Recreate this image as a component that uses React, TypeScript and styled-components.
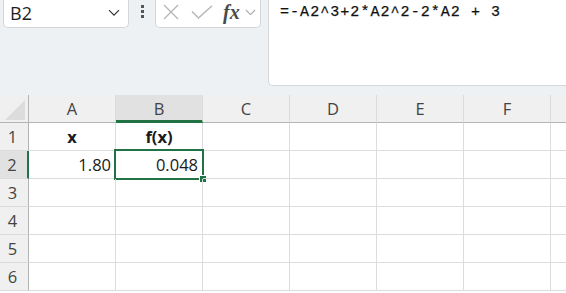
import React from "react";
import styled, { createGlobalStyle } from "styled-components";

const Global = createGlobalStyle`
  html, body { margin: 0; padding: 0; background: #ffffff; }
  body { font-family: "Open Sans", "Noto Sans", sans-serif; overflow: hidden; }
  * { box-sizing: border-box; }
`;

const Page = styled.div`
  width: 566px;
  height: 293px;
  overflow: hidden;
  display: flex;
  flex-direction: column;
`;

const Toolbar = styled.div`
  height: 95px;
  background: #eef1f3;
  display: flex;
  align-items: flex-start;
  padding-left: 3px;
  flex: none;
`;

const NameBox = styled.div`
  width: 126px;
  height: 28px;
  background: #fff;
  border: 1px solid #d4d6d8;
  border-top: none;
  border-radius: 0 0 5px 5px;
  display: flex;
  align-items: center;
  justify-content: space-between;
  padding: 0 8px 1px 6px;
  font-size: 18px;
  color: #1f1f1f;
`;

const Dots = styled.div`
  width: 26px;
  height: 28px;
  display: flex;
  flex-direction: column;
  align-items: center;
  justify-content: center;
  gap: 2px;
  padding-bottom: 6px;
`;

const Dot = styled.span`
  width: 3px;
  height: 3px;
  background: #555;
  display: block;
`;

const FxBox = styled.div`
  width: 106px;
  height: 28px;
  background: #fff;
  border: 1px solid #d4d6d8;
  border-top: none;
  border-radius: 0 0 5px 5px;
  display: flex;
  align-items: center;
  padding: 0 0 3px 7px;
`;

const Fx = styled.span`
  font-family: "Liberation Serif", "DejaVu Serif", serif;
  font-style: italic;
  font-weight: bold;
  font-size: 20px;
  color: #4a4a4a;
  margin-left: 10px;
  line-height: 1;
`;

const FormulaBar = styled.div`
  flex: 1;
  margin-left: 7px;
  height: 86px;
  background: #fff;
  border: 1px solid #d4d6d8;
  border-top: none;
  border-right: none;
  border-radius: 0 0 0 5px;
  padding: 4px 0 0 11px;
  font-family: "Liberation Mono", "DejaVu Sans Mono", monospace;
  font-size: 15px;
  letter-spacing: 1.05px;
  color: #111;
  white-space: pre;
  -webkit-text-stroke: 0.25px #111;
`;

const Grid = styled.div`
  display: grid;
  grid-template-columns: 29px repeat(7, 87px);
  grid-auto-rows: 28px;
  background: #fff;
`;

const Corner = styled.div`
  background: #f0f0f0;
  border-right: 1px solid #b4b4b4;
  border-bottom: 1px solid #b4b4b4;
  position: relative;
`;

const ColHead = styled.div<{ $sel?: boolean }>`
  background: ${(p) => (p.$sel ? "#e1e1e1" : "#f0f0f0")};
  border-right: 1px solid #dcdcdc;
  border-bottom: ${(p) => (p.$sel ? "3px solid #217346" : "1px solid #b4b4b4")};
  display: flex;
  align-items: center;
  justify-content: center;
  font-size: 16.5px;
  color: #444;
  padding-top: ${(p) => (p.$sel ? "1px" : "0")};
`;

const RowHead = styled.div<{ $sel?: boolean }>`
  background: ${(p) => (p.$sel ? "#e1e1e1" : "#f0f0f0")};
  border-right: ${(p) => (p.$sel ? "2px solid #217346" : "1px solid #b4b4b4")};
  border-bottom: 1px solid #dcdcdc;
  display: flex;
  align-items: center;
  justify-content: center;
  font-size: 16.5px;
  color: #444;
  padding-right: 3px;
`;

const Cell = styled.div<{ $align?: "left" | "center" | "right"; $bold?: boolean }>`
  border-right: 1px solid #dcdcdc;
  border-bottom: 1px solid #dcdcdc;
  display: flex;
  align-items: center;
  justify-content: ${(p) =>
    p.$align === "center" ? "center" : p.$align === "right" ? "flex-end" : "flex-start"};
  padding: 0 4px 0 4px;
  font-size: 16.5px;
  font-weight: ${(p) => (p.$bold ? 700 : 400)};
  color: #1a1a1a;
  position: relative;
`;

const Selection = styled.div`
  position: absolute;
  left: -2px;
  top: -2px;
  right: -2px;
  bottom: -2px;
  border: 2px solid #217346;
  pointer-events: none;
`;

const Handle = styled.div`
  position: absolute;
  right: -4px;
  bottom: -4px;
  width: 6px;
  height: 6px;
  background: #217346;
  outline: 1px solid #fff;
`;

const Chevron = ({ size = 12, color = "#444" }: { size?: number; color?: string }) => (
  <svg width={size} height={size * 0.6} viewBox="0 0 12 7" fill="none">
    <path d="M1 1l5 5 5-5" stroke={color} strokeWidth="1.2" />
  </svg>
);

const cols = ["A", "B", "C", "D", "E", "F", ""];

export default function App() {
  const rows = [1, 2, 3, 4, 5, 6];
  const content: Record<string, { v: string; align: "left" | "center" | "right"; bold?: boolean }> = {
    A1: { v: "x", align: "center", bold: true },
    B1: { v: "f(x)", align: "center", bold: true },
    A2: { v: "1.80", align: "right" },
    B2: { v: "0.048", align: "right" },
  };
  return (
    <Page>
      <Global />
      <Toolbar>
        <NameBox>
          <span>B2</span>
          <Chevron size={12} color="#333" />
        </NameBox>
        <Dots>
          <Dot />
          <Dot />
          <Dot />
        </Dots>
        <FxBox>
          <svg width="16" height="16" viewBox="0 0 16 16" fill="none">
            <path d="M1 1l14 14M15 1L1 15" stroke="#b4b4b4" strokeWidth="1.3" />
          </svg>
          <svg width="22" height="14" viewBox="0 0 22 14" fill="none" style={{ marginLeft: 12 }}>
            <path d="M1 6.5l6.5 6.5L21 0.8" stroke="#b4b4b4" strokeWidth="1.3" />
          </svg>
          <Fx>fx</Fx>
          <span style={{ marginLeft: 5, display: "flex" }}>
            <Chevron size={11} color="#aaa" />
          </span>
        </FxBox>
        <FormulaBar>=-A2^3+2*A2^2-2*A2 + 3</FormulaBar>
      </Toolbar>
      <Grid>
        <Corner>
          <svg width="22" height="22" viewBox="0 0 22 22" style={{ position: "absolute", left: 4, top: 4 }}>
            <path d="M21 1V21H1Z" fill="#dcdcdc" />
          </svg>
        </Corner>
        {cols.map((c, i) => (
          <ColHead key={i} $sel={c === "B"}>
            {c}
          </ColHead>
        ))}
        {rows.map((r) => (
          <React.Fragment key={r}>
            <RowHead $sel={r === 2}>{r}</RowHead>
            {cols.map((c, i) => {
              const k = `${c}${r}`;
              const d = content[k];
              return (
                <Cell key={i} $align={d?.align} $bold={d?.bold}>
                  {d?.v}
                  {k === "B2" && (
                    <Selection>
                      <Handle />
                    </Selection>
                  )}
                </Cell>
              );
            })}
          </React.Fragment>
        ))}
      </Grid>
    </Page>
  );
}
